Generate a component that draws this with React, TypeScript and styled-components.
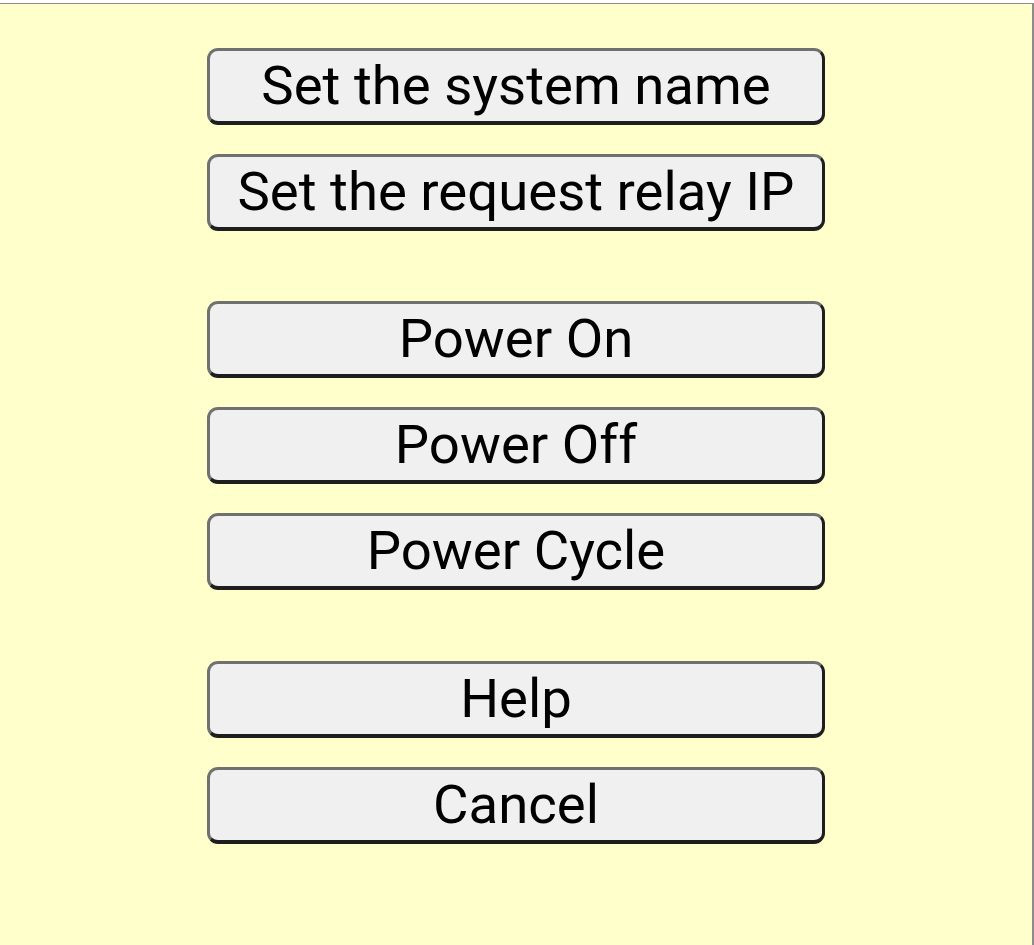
import React from "react";
import styled, { createGlobalStyle } from "styled-components";

const Global = createGlobalStyle`
  html, body { margin: 0; padding: 0; background: #ffffff; }
  body { font-family: Roboto, "Noto Sans", sans-serif; }
`;

const Frame = styled.div`
  margin-top: 3px;
  box-sizing: border-box;
  width: 1034px;
  height: 942px;
  background: #ffffcc;
  border-top: 1px solid #8c8c8c;
  border-right: 2px solid #8c8c8c;
  display: flex;
  flex-direction: column;
  align-items: center;
  padding-top: 44px;
`;

const Group = styled.div<{ $space?: number }>`
  display: flex;
  flex-direction: column;
  gap: 29px;
  margin-top: ${(p) => p.$space ?? 0}px;
`;

const Button = styled.button`
  box-sizing: border-box;
  width: 618px;
  height: 77px;
  padding: 0 0 3px;
  background: #f0f0f0;
  border-style: solid;
  border-width: 3px 3px 4px 3px;
  border-color: #707070 #1e1e1e #1e1e1e #707070;
  border-radius: 11px;
  font-family: Roboto, "Noto Sans", sans-serif;
  font-size: 54.5px;
  color: #000000;
  display: flex;
  align-items: center;
  justify-content: center;
  white-space: nowrap;
`;

const groups = [
  ["Set the system name", "Set the request relay IP"],
  ["Power On", "Power Off", "Power Cycle"],
  ["Help", "Cancel"],
];

export default function App() {
  return (
    <>
      <Global />
      <Frame>
        {groups.map((g, i) => (
          <Group key={i} $space={i === 0 ? 0 : i === 1 ? 70 : 71}>
            {g.map((label) => (
              <Button key={label}>{label}</Button>
            ))}
          </Group>
        ))}
      </Frame>
    </>
  );
}
